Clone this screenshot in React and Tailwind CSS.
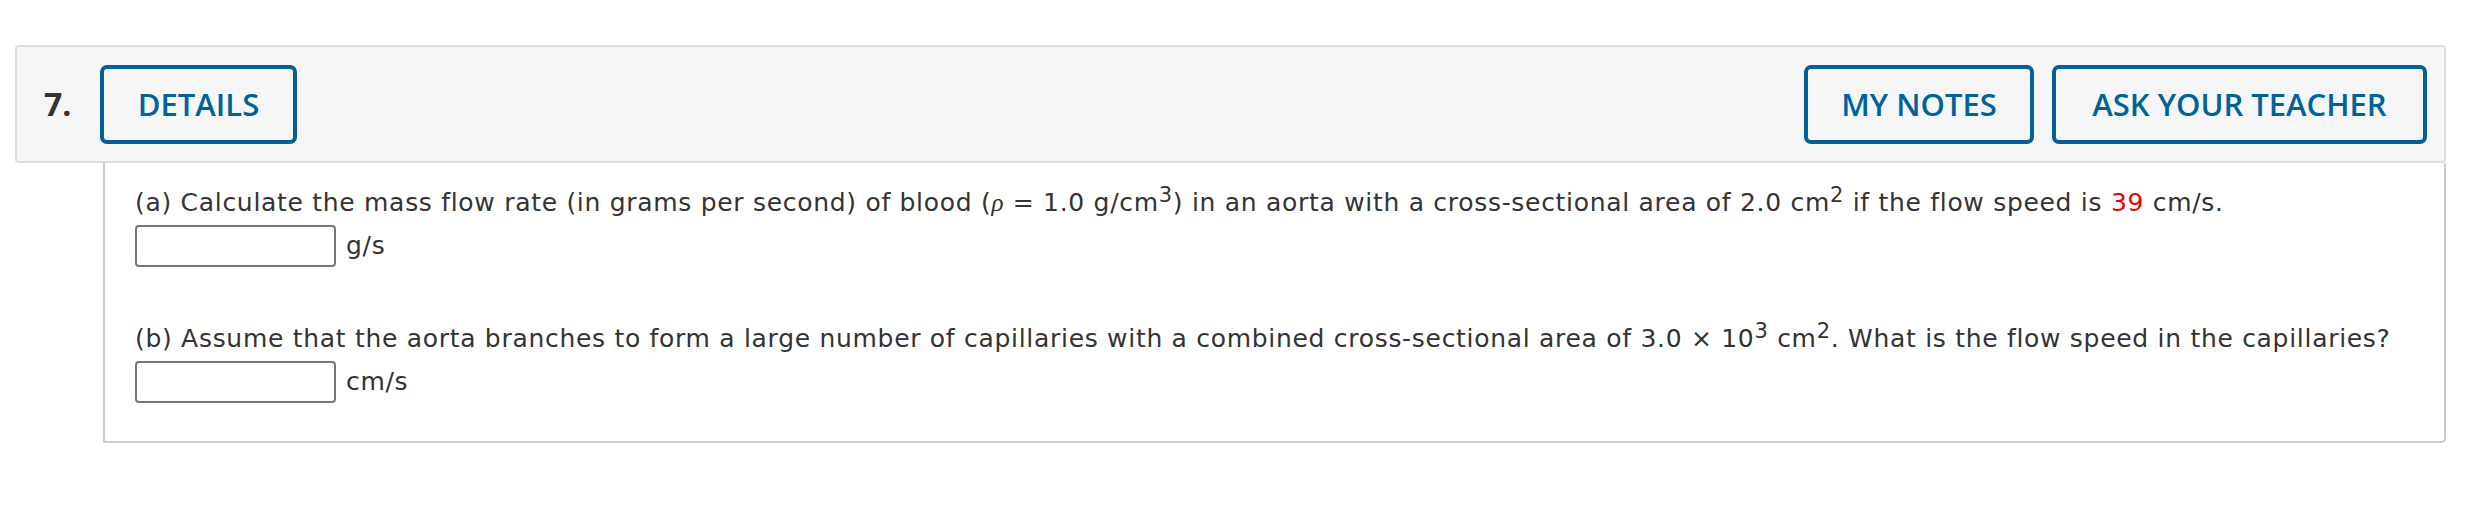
const Sup = ({ children }) => (
  <sup className="relative -top-[9px] align-baseline text-[21px] leading-none">{children}</sup>
);

const AnswerRow = ({ unit }) => (
  <div className="mt-[7px] flex items-center gap-[10px]">
    <input
      type="text"
      className="h-[42px] w-[201px] rounded-[4px] border-2 border-[#767676] bg-white"
    />
    <span>{unit}</span>
  </div>
);

const HeaderButton = ({ label, width }) => (
  <button
    className={`flex h-[79px] ${width} items-center justify-center rounded-[7px] border-4 border-[#00629b] text-[31px] font-semibold text-[#00629b]`}
    style={{ fontFamily: '"Open Sans", sans-serif' }}
  >
    {label}
  </button>
);

export default function App() {
  return (
    <div className="w-[2446px] bg-white pl-[15px] pt-[45px]">
      <div
        className="flex h-[118px] items-center rounded-[4px] border-2 border-[#dddddd] bg-[#f6f6f6] pl-[27px] pr-[17px]"
        style={{ fontFamily: '"Open Sans", sans-serif' }}
      >
        <span className="w-[56px] text-[32px] font-bold text-[#333333]">7.</span>
        <HeaderButton label="DETAILS" width="w-[197px]" />
        <div className="flex-1" />
        <div className="flex gap-[18px]">
          <HeaderButton label="MY NOTES" width="w-[230px]" />
          <HeaderButton label="ASK YOUR TEACHER" width="w-[375px]" />
        </div>
      </div>

      <div
        className="ml-[88px] h-[280px] rounded-br-[5px] border-x-2 border-b-2 border-[#cccccc] pl-[30px] pt-[25px] text-[25px] leading-[30px] tracking-[0.7px] text-[#333333]"
        style={{ fontFamily: '"DejaVu Sans", Verdana, sans-serif' }}
      >
        <p>
          (a) Calculate the mass flow rate (in grams per second) of blood (
          <i style={{ fontFamily: '"Liberation Serif", serif' }}>ρ</i> = 1.0 g/cm<Sup>3</Sup>) in an
          aorta with a cross-sectional area of 2.0 cm<Sup>2</Sup> if the flow speed is{' '}
          <span className="text-[#ee0000]">39</span> cm/s.
        </p>
        <AnswerRow unit="g/s" />

        <p className="mt-[57px]">
          (b) Assume that the aorta branches to form a large number of capillaries with a combined
          cross-sectional area of 3.0 × 10<Sup>3</Sup> cm<Sup>2</Sup>. What is the flow speed in the
          capillaries?
        </p>
        <AnswerRow unit="cm/s" />
      </div>
    </div>
  );
}
